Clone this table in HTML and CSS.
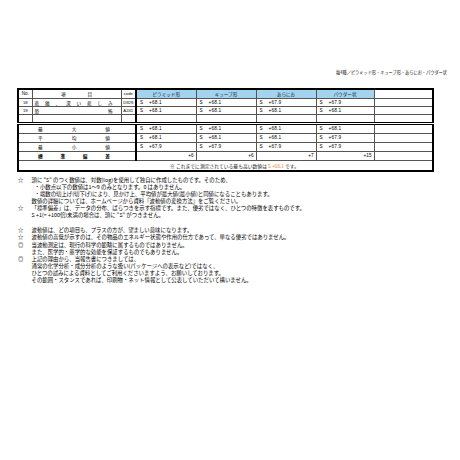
FILE: index.html
```html
<!DOCTYPE html>
<html lang="ja">
<head>
<meta charset="utf-8">
<title>波動値</title>
<link rel="stylesheet" href="styles.css">
</head>
<body>
<div class="page">
  <div class="title">塩4種／ピラミッド形・キューブ形・あらにお・パウダー状</div>
  <table class="grid">
    <colgroup>
      <col class="c-no"><col class="c-item"><col class="c-code">
      <col class="c-val"><col class="c-val"><col class="c-val"><col class="c-val4"><col class="c-extra">
    </colgroup>
    <thead>
      <tr class="head">
        <th class="no">No.</th>
        <th class="item-h"><span>項</span><span>目</span></th>
        <th class="code">code</th>
        <th class="blue">ピラミッド形</th>
        <th class="blue">キューブ形</th>
        <th class="blue">あらにお</th>
        <th class="blue">パウダー状</th>
        <th class="blank"></th>
      </tr>
    </thead>
    <tbody>
      <tr class="row">
        <td class="no">18</td>
        <td class="item">悲痛、深い悲しみ</td>
        <td class="code">D929</td>
        <td class="val"><span class="s">S</span><span class="n">+68.1</span></td>
        <td class="val"><span class="s">S</span><span class="n">+68.1</span></td>
        <td class="val"><span class="s">S</span><span class="n">+67.9</span></td>
        <td class="val"><span class="s">S</span><span class="n">+67.9</span></td>
        <td></td>
      </tr>
      <tr class="row">
        <td class="no">19</td>
        <td class="item">恐怖</td>
        <td class="code">A241</td>
        <td class="val"><span class="s">S</span><span class="n">+68.1</span></td>
        <td class="val"><span class="s">S</span><span class="n">+68.1</span></td>
        <td class="val"><span class="s">S</span><span class="n">+68.1</span></td>
        <td class="val"><span class="s">S</span><span class="n">+68.1</span></td>
        <td></td>
      </tr>
      <tr class="row empty">
        <td></td><td></td><td class="code"></td><td></td><td></td><td></td><td></td><td></td>
      </tr>
      <tr class="stat first">
        <td colspan="3" class="label">最大値</td>
        <td class="val"><span class="s">S</span><span class="n">+68.1</span></td>
        <td class="val"><span class="s">S</span><span class="n">+68.1</span></td>
        <td class="val"><span class="s">S</span><span class="n">+68.1</span></td>
        <td class="val"><span class="s">S</span><span class="n">+68.1</span></td>
        <td></td>
      </tr>
      <tr class="stat">
        <td colspan="3" class="label">平均値</td>
        <td class="val"><span class="s">S</span><span class="n">+68.1</span></td>
        <td class="val"><span class="s">S</span><span class="n">+68.1</span></td>
        <td class="val"><span class="s">S</span><span class="n">+68.1</span></td>
        <td class="val"><span class="s">S</span><span class="n">+67.9</span></td>
        <td></td>
      </tr>
      <tr class="stat">
        <td colspan="3" class="label">最小値</td>
        <td class="val"><span class="s">S</span><span class="n">+67.9</span></td>
        <td class="val"><span class="s">S</span><span class="n">+67.9</span></td>
        <td class="val"><span class="s">S</span><span class="n">+67.9</span></td>
        <td class="val"><span class="s">S</span><span class="n">+67.9</span></td>
        <td></td>
      </tr>
      <tr class="stat std">
        <td colspan="3" class="label strong">標準偏差</td>
        <td class="r">+6</td>
        <td class="r">+6</td>
        <td class="r">+7</td>
        <td class="r">+15</td>
        <td></td>
      </tr>
      <tr class="note">
        <td colspan="8">※ これまでに測定されている最も高い数値は <span class="hi">S +68.1</span> です。</td>
      </tr>
    </tbody>
  </table>

  <div class="notes">
    <div class="note-item">
      <span class="mark">☆</span>
      <div class="body">
        <p>頭に "S" のつく数値は、対数(log)を使用して独自に作成したものです。そのため、</p>
        <p class="sub">・小数点以下の数値は1～9 のみとなります。0 はありません。</p>
        <p class="sub">・端数の切上げ(切下げ)により、見かけ上、平均値が最大値(最小値)と同値になることもあります。</p>
        <p>数値の詳細については、ホームページから資料『波動値の変換方法』をご覧ください。</p>
      </div>
    </div>
    <div class="note-item">
      <span class="mark">☆</span>
      <div class="body">
        <p>「標準偏差」は、データの分布、ばらつきを示す指標です。また、優劣ではなく、ひとつの特徴を表すものです。</p>
        <p>S +1(= +100倍)未満の場合は、頭に "S" がつきません。</p>
      </div>
    </div>
    <div class="note-item gap">
      <span class="mark">☆</span>
      <div class="body"><p>波動値は、どの項目も、プラスの方が、望ましい意味になります。</p></div>
    </div>
    <div class="note-item">
      <span class="mark">☆</span>
      <div class="body"><p>波動値の高低が示すのは、その物品のエネルギー状態や作用の仕方であって、単なる優劣ではありません。</p></div>
    </div>
    <div class="note-item small-gap">
      <span class="mark">◎</span>
      <div class="body">
        <p>当波動測定は、現行の科学の範疇に属するものではありません。</p>
        <p>また、医学的・薬学的な効能を保証するものでもありません。</p>
      </div>
    </div>
    <div class="note-item">
      <span class="mark">◎</span>
      <div class="body">
        <p>上記の理由から、当報告書につきましては、</p>
        <p>通常の化学分析・成分分析のような扱い(パッケージへの表示など)ではなく、</p>
        <p>ひとつの試みによる資料としてご利用くださいますよう、お願いしております。</p>
        <p>その範囲・スタンスであれば、印刷物・ネット情報として公表していただいて構いません。</p>
      </div>
    </div>
  </div>
</div>
</body>
</html>
```

FILE: styles.css
```css
html, body {
  margin: 0;
  padding: 0;
  background: #fff;
}
body {
  font-family: "Liberation Sans", "Noto Sans CJK JP", sans-serif;
  color: #000;
}
.page {
  padding-top: 70px;
}
.title {
  font-family: "Noto Sans CJK JP", sans-serif;
  font-size: 4.2px;
  line-height: 5px;
  text-align: right;
  padding-right: 13px;
  color: #111;
}

/* table */
.grid {
  margin: 13px 0 0 17px;
  width: 415px;
  border-collapse: collapse;
  table-layout: fixed;
  border: 2px solid #000;
}
.c-no { width: 14px; }
.c-item { width: 89px; }
.c-code { width: 15px; }
.c-val { width: 60px; }
.c-val4 { width: 58px; }
.c-extra { width: 59px; }

.grid th,
.grid td {
  padding: 0;
  border: 1px solid #555;
  height: 7px;
  line-height: 6px;
  font-size: 4.6px;
  font-weight: normal;
  white-space: nowrap;
  overflow: hidden;
  vertical-align: middle;
}
.grid .head th {
  height: 8px;
  text-align: center;
}
.grid .head th.blue {
  background: #a2d4ef;
  color: #1a2a3a;
  font-family: "Noto Sans CJK JP", sans-serif;
  font-size: 4.6px;
}
.grid .code {
  border-right: 2px solid #000;
  text-align: center;
  font-size: 4.2px;
}
.grid td.no {
  text-align: center;
  font-size: 4.2px;
}
.item-h span {
  margin: 0 11px;
  font-family: "Noto Sans CJK JP", sans-serif;
}
.grid td.item {
  font-family: "Noto Sans CJK JP", sans-serif;
  font-size: 4.6px;
  padding: 0 8px 0 2px;
  text-align: justify;
  text-align-last: justify;
  text-justify: inter-character;
}
.val .s {
  display: inline-block;
  width: 9px;
  padding-left: 3px;
}
.val .n {
  letter-spacing: 0.2px;
}
.grid td.val {
  font-size: 4.7px;
}
.grid td.r {
  text-align: right;
  padding-right: 2px;
  font-size: 4.7px;
}
.grid tr.stat td {
  height: 8px;
}
.grid tr.first td {
  border-top: 3px double #000;
}
.grid td.label {
  border-right: 2px solid #000;
  font-family: "Noto Sans CJK JP", sans-serif;
  font-size: 4.7px;
  padding: 0 25px 0 19px;
  text-align: justify;
  text-align-last: justify;
  text-justify: inter-character;
}
.grid td.label.strong {
  font-weight: bold;
}
.grid tr.note td {
  height: 9px;
  line-height: 8px;
  text-align: center;
  font-family: "Noto Sans CJK JP", sans-serif;
  font-size: 4.8px;
  color: #222;
  padding-left: 18px;
}
.hi {
  color: #f07a10;
}

/* notes */
.notes {
  margin: 5px 0 0 18px;
  font-family: "Noto Sans CJK JP", sans-serif;
  font-size: 5.4px;
  line-height: 7px;
  color: #000;
}
.note-item {
  display: flex;
}
.note-item.gap {
  margin-top: 8px;
}
.note-item.small-gap {
  margin-top: 1px;
}
.mark {
  width: 13.5px;
  flex: none;
  text-align: left;
}
.body p {
  margin: 0;
  white-space: nowrap;
}
.body p.sub {
  padding-left: 3px;
}
```
